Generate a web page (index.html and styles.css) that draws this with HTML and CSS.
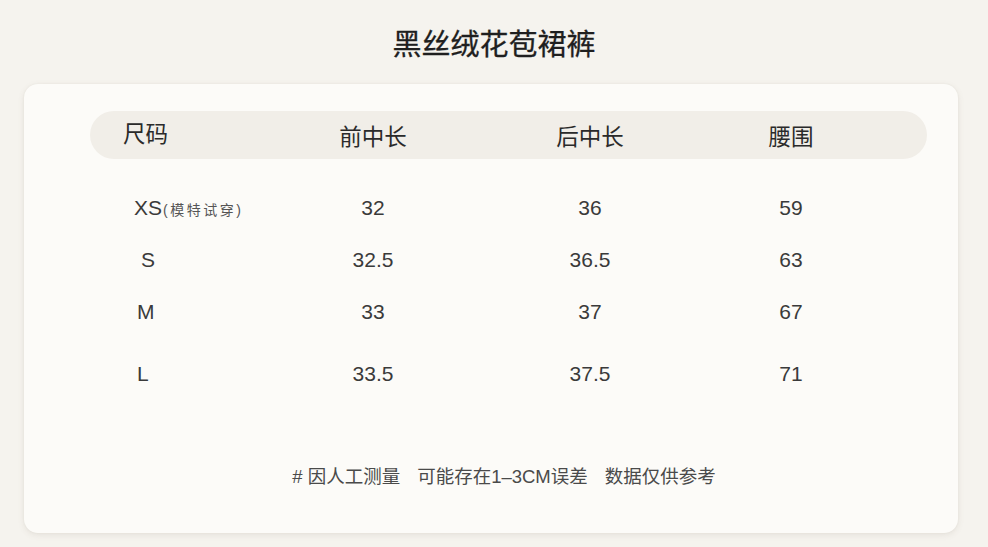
FILE: index.html
```html
<!DOCTYPE html>
<html lang="zh">
<head>
<meta charset="utf-8">
<link rel="stylesheet" href="styles.css">
</head>
<body>
<div class="page">
  <h1 class="title">黑丝绒花苞裙裤</h1>
  <div class="card">
    <div class="thead">
      <div class="c1 head-first">尺码</div>
      <div class="c">前中长</div>
      <div class="c">后中长</div>
      <div class="c">腰围</div>
    </div>
    <div class="row">
      <div class="c1 size">XS<span class="note">(模特试穿)</span></div>
      <div class="c">32</div>
      <div class="c">36</div>
      <div class="c">59</div>
    </div>
    <div class="row">
      <div class="c1 size s">S</div>
      <div class="c">32.5</div>
      <div class="c">36.5</div>
      <div class="c">63</div>
    </div>
    <div class="row">
      <div class="c1 size m">M</div>
      <div class="c">33</div>
      <div class="c">37</div>
      <div class="c">67</div>
    </div>
    <div class="row last">
      <div class="c1 size m">L</div>
      <div class="c">33.5</div>
      <div class="c">37.5</div>
      <div class="c">71</div>
    </div>
    <p class="foot"><span># 因人工测量</span><span class="gap">可能存在1–3CM误差</span><span class="gap">数据仅供参考</span></p>
  </div>
</div>
</body>
</html>
```
FILE: styles.css
```css
* { box-sizing: border-box; }
html, body {
  margin: 0;
  padding: 0;
  background: #f5f3ee;
  font-family: "Liberation Sans", "Noto Sans CJK SC", sans-serif;
  color: #333;
}
.page {
  width: 988px;
  height: 547px;
  padding: 22px 30px 0 24px;
}
.title {
  margin: 0;
  height: 62px;
  text-align: center;
  font-family: "Noto Sans CJK SC", sans-serif;
  font-size: 29px;
  font-weight: 400;
  -webkit-text-stroke: 0.3px #1f1f1f;
  line-height: 40px;
  color: #1f1f1f;
  padding-left: 6px;
}
.card {
  width: 934px;
  height: 449px;
  background: #fcfbf8;
  border-radius: 14px;
  box-shadow: 0 2px 6px rgba(120, 110, 90, 0.12), 0 0 2px rgba(120, 110, 90, 0.08);
  padding: 27px 0 0 66px;
}
.thead, .row {
  display: grid;
  grid-template-columns: 210px 146px 288px 114px;
  align-items: center;
}
.thead {
  width: 837px;
  height: 48px;
  border-radius: 24px;
  background: #f1eee8;
  font-family: "Noto Sans CJK SC", sans-serif;
  font-size: 22.5px;
  color: #2a2a2a;
  margin-bottom: 23px;
}
.head-first {
  padding-left: 33px;
  position: relative;
  top: -3px;
}
.c { text-align: center; }
.row {
  height: 52px;
  font-size: 21px;
  color: #3a3a3a;
}
.row.last { margin-top: 10px; }
.size { padding-left: 44px; }
.size.s { padding-left: 51px; }
.size.m { padding-left: 47px; }
.note {
  font-family: "Liberation Sans", "Noto Sans CJK SC", sans-serif;
  font-size: 14px;
  letter-spacing: 2.5px;
  color: #555;
  margin-left: 1px;
}
.foot {
  margin: 62px 0 0 -66px;
  text-align: center;
  font-family: "Liberation Sans", "Noto Sans CJK SC", sans-serif;
  font-size: 18.5px;
  color: #4a4a4a;
  padding-left: 26px;
}
.gap { margin-left: 17px; }
```
